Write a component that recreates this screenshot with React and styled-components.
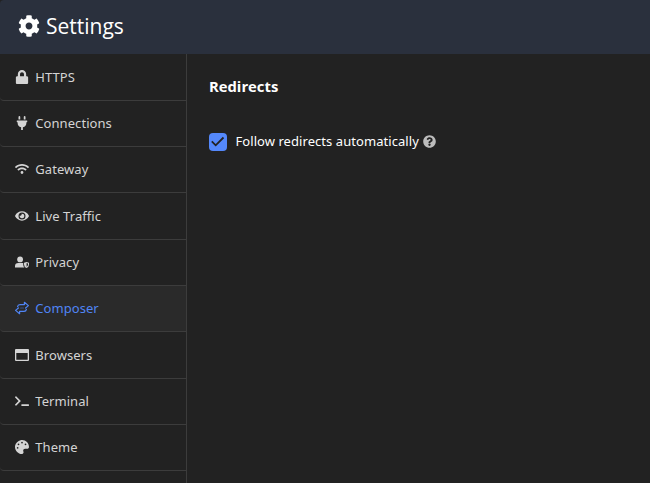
import React from "react";
import styled, { createGlobalStyle } from "styled-components";
import {
  FaCog, FaLock, FaPlug, FaWifi, FaEye,
  FaTerminal, FaPalette, FaQuestionCircle,
} from "react-icons/fa";

const GlobalStyle = createGlobalStyle`
  * { box-sizing: border-box; }
  body { margin: 0; background: #222222; overflow: hidden; }
`;

const Window = styled.div`
  display: flex;
  flex-direction: column;
  width: 650px;
  height: 483px;
  overflow: hidden;
  background: #222222;
  color: #ffffff;
  font-family: "Noto Sans", "Open Sans", sans-serif;
  font-size: 13px;
  letter-spacing: 0.06px;
`;

const Header = styled.header`
  display: flex;
  align-items: center;
  flex: none;
  gap: 6px;
  height: 54px;
  padding: 0 18px 2px;
  border-top-left-radius: 4px;
  background: #2a303d;

  svg { width: 22px; height: 22px; }
`;

const Title = styled.h1`
  margin: 0;
  font-family: "Open Sans", sans-serif;
  font-size: 21px;
  font-weight: 400;
  line-height: 30px;
  letter-spacing: 0;
`;

const Body = styled.div`
  display: flex;
  flex: 1;
  min-height: 0;
`;

const Sidebar = styled.nav`
  flex: none;
  width: 187px;
  border-right: 1px solid #3c3c3c;
  overflow: hidden;
`;

const NavItem = styled.a`
  display: flex;
  align-items: center;
  gap: 6.3px;
  height: 46.3px;
  padding: 0 0 0.6px 15px;
  border-bottom: 1px solid #3c3c3c;
  border-bottom-left-radius: 4px;
  background: ${(p) => (p.$active ? "#2a2a2a" : "transparent")};
  color: ${(p) => (p.$active ? "#5085f5" : "#d4d4d4")};

  svg { flex: none; width: 14px; height: 14px; }

  &:first-child { height: 46.8px; }
`;

const Content = styled.main`
  flex: 1;
  padding: 22px;
`;

const SectionTitle = styled.h2`
  margin: 0 0 36px;
  font-family: "Open Sans", sans-serif;
  font-size: 14.8px;
  font-weight: 700;
  line-height: 21px;
  letter-spacing: 0;
`;

const Option = styled.label`
  display: flex;
  align-items: center;
  height: 18px;
`;

const OptionLabel = styled.span`
  margin-bottom: 2px;
  line-height: 18px;
`;

const CheckBox = styled.span`
  display: flex;
  flex: none;
  width: 18px;
  height: 18px;
  margin-right: 8.5px;
  border-radius: 4px;
  background: #5488fb;
`;

const Help = styled.span`
  display: flex;
  margin: 0 0 2px 4px;
  color: #bcbcbc;
  svg { width: 13px; height: 13px; }
`;

const SwapIcon = () => (
  <svg viewBox="0 0 14 14" fill="none" stroke="currentColor" strokeWidth="1.2" strokeLinejoin="round" strokeLinecap="round">
    <path d="M2.6 5.6C2.8 4.2 3.6 3.6 5 3.6H9.4V1.3L13.4 4.6 10.6 7" />
    <path d="M11.4 8.4C11.2 9.8 10.4 10.4 9 10.4H4.6V12.7L.6 9.4 3.4 7" />
    <path d="M5.6 7H8.4" strokeOpacity="0.45" />
  </svg>
);

const UserShieldIcon = () => (
  <svg viewBox="0 0 14 14" fill="currentColor">
    <circle cx="5.1" cy="4.4" r="2.9" />
    <path d="M0 12.4V11.2Q0 8.1 3.4 8.1H8.2V9.4Q8.2 11.4 9.4 12.6H.3Z" />
    <path fillRule="evenodd" d="M11.5 6.9L14 7.8V9.5Q14 12 11.5 12.9 9 12 9 9.5V7.8ZM11.6 8.1V11.7Q13 11 13 9.5V8.6Z" />
  </svg>
);

const CheckMark = () => (
  <svg width="18" height="18" viewBox="0 0 18 18" fill="none" stroke="#222222" strokeWidth="1.8">
    <path d="M2.8 8.4L6.7 12.3 14.5 4.5" />
  </svg>
);

const WindowIcon = () => (
  <svg viewBox="0 0 14 14" fill="currentColor">
    <path fillRule="evenodd" d="M1 .9H13Q14 .9 14 1.9V12.1Q14 13.1 13 13.1H1Q0 13.1 0 12.1V1.9Q0 .9 1 .9ZM1.3 5V11.8H12.7V5Z" />
  </svg>
);

const items = [
  ["HTTPS", FaLock],
  ["Connections", FaPlug],
  ["Gateway", FaWifi],
  ["Live Traffic", FaEye],
  ["Privacy", UserShieldIcon],
  ["Composer", SwapIcon],
  ["Browsers", WindowIcon],
  ["Terminal", FaTerminal],
  ["Theme", FaPalette],
];

export default function App() {
  return (
    <>
      <GlobalStyle />
      <Window>
        <Header>
          <FaCog />
          <Title>Settings</Title>
        </Header>
        <Body>
          <Sidebar>
            {items.map(([label, Icon]) => (
              <NavItem key={label} $active={label === "Composer"}>
                <Icon />
                <span>{label}</span>
              </NavItem>
            ))}
          </Sidebar>
          <Content>
            <SectionTitle>Redirects</SectionTitle>
            <Option>
              <CheckBox><CheckMark /></CheckBox>
              <OptionLabel>Follow redirects automatically</OptionLabel>
              <Help><FaQuestionCircle /></Help>
            </Option>
          </Content>
        </Body>
      </Window>
    </>
  );
}
